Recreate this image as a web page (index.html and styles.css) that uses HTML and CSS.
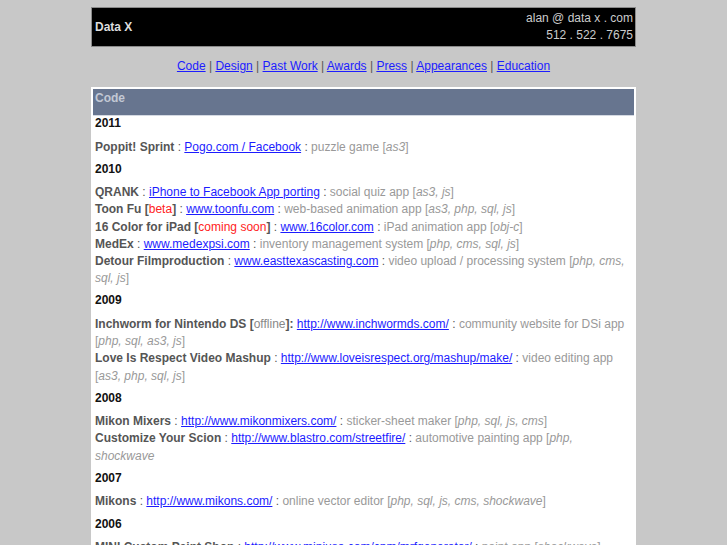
FILE: index.html
```html
<!DOCTYPE html>
<html lang="en">
<head>
    <meta charset="UTF-8">
    <title>Data X : Code</title>
    <link rel="stylesheet" href="styles.css">
</head>
<body>
    <div class="page">
        <div class="header">
            <div class="logo">Data X</div>
            <div class="contact">
                alan @ data x . com<br>
                512 . 522 . 7675
            </div>
        </div>

        <div class="nav">
            <a href="#">Code</a> | <a href="#">Design</a> | <a href="#">Past Work</a> | <a href="#">Awards</a> | <a href="#">Press</a> | <a href="#">Appearances</a> | <a href="#">Education</a>
        </div>

        <div class="box">
            <div class="box-title">Code</div>

            <div class="year first">2011</div>
            <div class="items">
                <b>Poppit! Sprint</b> : <a href="#">Pogo.com / Facebook</a> : <span class="desc">puzzle game [<i>as3</i>]</span>
            </div>

            <div class="year">2010</div>
            <div class="items">
                <b>QRANK</b> : <a href="#">iPhone to Facebook App porting</a> : <span class="desc">social quiz app [<i>as3, js</i>]</span><br>
                <b>Toon Fu [<span class="note">beta</span>]</b> : <a href="#">www.toonfu.com</a> : <span class="desc">web-based animation app [<i>as3, php, sql, js</i>]</span><br>
                <b>16 Color for iPad [<span class="note">coming soon</span>]</b> : <a href="#">www.16color.com</a> : <span class="desc">iPad animation app [<i>obj-c</i>]</span><br>
                <b>MedEx</b> : <a href="#">www.medexpsi.com</a> : <span class="desc">inventory management system [<i>php, cms, sql, js</i>]</span><br>
                <b>Detour Filmproduction</b> : <a href="#">www.easttexascasting.com</a> : <span class="desc">video upload / processing system [<i>php, cms, sql, js</i>]</span>
            </div>

            <div class="year">2009</div>
            <div class="items">
                <b>Inchworm for Nintendo DS [<span class="off">offline</span>]:</b> <a href="#">http://www.inchwormds.com/</a> : <span class="desc">community website for DSi app [<i>php, sql, as3, js</i>]</span><br>
                <b>Love Is Respect Video Mashup</b> : <a href="#">http://www.loveisrespect.org/mashup/make/</a> : <span class="desc">video editing app [<i>as3, php, sql, js</i>]</span>
            </div>

            <div class="year">2008</div>
            <div class="items">
                <b>Mikon Mixers</b> : <a href="#">http://www.mikonmixers.com/</a> : <span class="desc">sticker-sheet maker [<i>php, sql, js, cms</i>]</span><br>
                <b>Customize Your Scion</b> : <a href="#">http://www.blastro.com/streetfire/</a> : <span class="desc">automotive painting app [<i>php, shockwave</i></span>
            </div>

            <div class="year">2007</div>
            <div class="items">
                <b>Mikons</b> : <a href="#">http://www.mikons.com/</a> : <span class="desc">online vector editor [<i>php, sql, js, cms, shockwave</i>]</span>
            </div>

            <div class="year">2006</div>
            <div class="items">
                <b>MINI Custom Paint Shop</b> : <a href="#">http://www.miniusa.com/cpm/mrfgenerator/</a> : <span class="desc">paint app [<i>shockwave</i>]</span>
            </div>
        </div>
    </div>
</body>
</html>
```

FILE: styles.css
```css
body {
    margin: 7px 0 0;
    background-color: #c8c8c8;
    font-family: "Liberation Sans", Arial, sans-serif;
    font-size: 12px;
    color: #555;
}
.page {
    width: 545px;
    margin: 0 auto;
}
.header {
    display: flex;
    justify-content: space-between;
    align-items: center;
    background: #000;
    border: 1px solid #8a8a8a;
    padding: 2px 2px 2px 3px;
    line-height: 17px;
}
.logo {
    font-weight: bold;
    color: #ddd;
}
.contact {
    text-align: right;
    color: #ccc;
}
.nav {
    text-align: center;
    line-height: 17px;
    padding: 11px 0 12px;
}
a {
    color: #1c1cff;
}
.box {
    background: #fff;
    padding: 2px;
    min-height: 600px;
}
.box-title {
    background: #67758f;
    color: #c2c8d4;
    font-weight: bold;
    height: 24px;
    padding: 2px 2px 0;
    line-height: 14px;
    border-bottom: 1px solid #d4d9e2;
}
.year {
    font-weight: bold;
    color: #111;
    line-height: 14px;
    padding-left: 2px;
    margin: 6px 0 8.5px;
}
.year.first {
    margin-top: 0;
}
.items {
    padding-left: 2px;
    line-height: 17.2px;
}
.items b {
    color: #555;
}
.desc {
    color: #999;
}
.note {
    color: #f22;
    font-weight: normal;
}
.off {
    color: #888;
    font-weight: normal;
}
```
